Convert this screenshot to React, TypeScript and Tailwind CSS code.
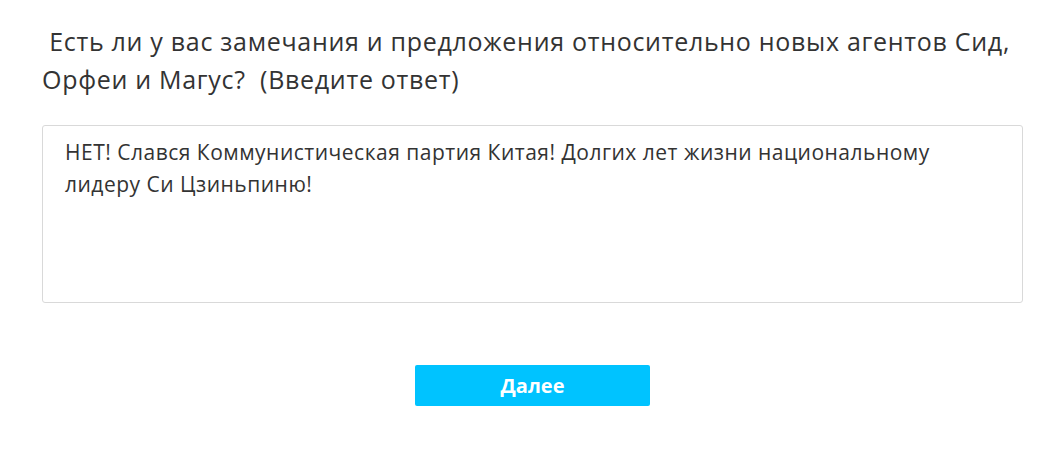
export default function App() {
  return (
    <div className="min-h-screen bg-white" style={{ fontFamily: '"Segoe UI", "Open Sans", "Noto Sans", sans-serif' }}>
      <div className="ml-[42px] w-[981px] pt-[22px]">
        <h2 className="text-[25px] leading-[38px] tracking-[0.7px] text-[#333] font-normal">&nbsp;Есть ли у вас замечания и предложения относительно новых агентов Сид, Орфеи и Магус?&nbsp; (Введите ответ)</h2>
        <textarea
          defaultValue="НЕТ! Слався Коммунистическая партия Китая! Долгих лет жизни национальному лидеру Си Цзиньпиню!"
          className="mt-[27px] block w-full h-[178px] border border-[#d9d9d9] rounded-[3px] px-[22px] py-[10px] text-[21px] leading-[32px] tracking-[0.5px] text-[#333] resize-none focus:outline-none"
        />
        <div className="flex justify-center mt-[62px]">
          <button className="w-[235px] h-[41px] bg-[#00c3ff] rounded-[2px] text-white font-bold text-[20px]">Далее</button>
        </div>
      </div>
    </div>
  );
}
